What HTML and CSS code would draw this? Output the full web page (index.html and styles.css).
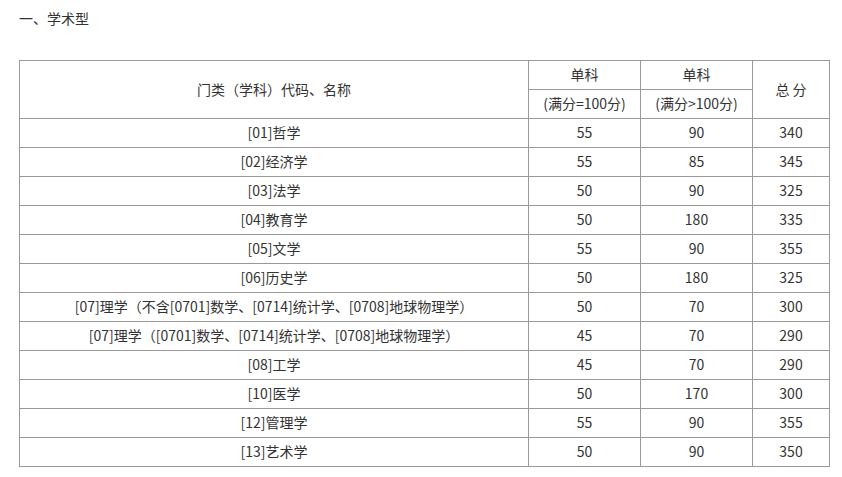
FILE: index.html
```html
<!DOCTYPE html>
<html lang="zh-CN">
<head>
<meta charset="utf-8">
<link rel="stylesheet" href="styles.css">
</head>
<body>
<p class="title">一、学术型</p>
<table class="score-table">
  <colgroup>
    <col class="c1"><col class="c2"><col class="c3"><col class="c4">
  </colgroup>
  <thead>
    <tr>
      <th rowspan="2">门类（学科）代码、名称</th>
      <th>单科</th>
      <th>单科</th>
      <th rowspan="2">总 分</th>
    </tr>
    <tr>
      <th>(满分=100分)</th>
      <th>(满分&gt;100分)</th>
    </tr>
  </thead>
  <tbody>
    <tr><td>[01]哲学</td><td>55</td><td>90</td><td>340</td></tr>
    <tr><td>[02]经济学</td><td>55</td><td>85</td><td>345</td></tr>
    <tr><td>[03]法学</td><td>50</td><td>90</td><td>325</td></tr>
    <tr><td>[04]教育学</td><td>50</td><td>180</td><td>335</td></tr>
    <tr><td>[05]文学</td><td>55</td><td>90</td><td>355</td></tr>
    <tr><td>[06]历史学</td><td>50</td><td>180</td><td>325</td></tr>
    <tr><td>[07]理学（不含[0701]数学、[0714]统计学、[0708]地球物理学）</td><td>50</td><td>70</td><td>300</td></tr>
    <tr><td>[07]理学（[0701]数学、[0714]统计学、[0708]地球物理学）</td><td>45</td><td>70</td><td>290</td></tr>
    <tr><td>[08]工学</td><td>45</td><td>70</td><td>290</td></tr>
    <tr><td>[10]医学</td><td>50</td><td>170</td><td>300</td></tr>
    <tr><td>[12]管理学</td><td>55</td><td>90</td><td>355</td></tr>
    <tr><td>[13]艺术学</td><td>50</td><td>90</td><td>350</td></tr>
  </tbody>
</table>
</body>
</html>
```

FILE: styles.css
```css
html, body {
  margin: 0;
  padding: 0;
  background: #fff;
}
body {
  padding: 0 0 0 19px;
  font-family: "Microsoft YaHei", "Noto Sans CJK SC", sans-serif;
  font-size: 14px;
  color: #333;
}
.title {
  margin: 0;
  padding-top: 7px;
  height: 60px;
  line-height: 22px;
  box-sizing: border-box;
}
.score-table {
  border-collapse: collapse;
  table-layout: fixed;
  width: 810px;
}
.c1 { width: 509px; }
.c2 { width: 112px; }
.c3 { width: 112px; }
.c4 { width: 77px; }
.score-table th,
.score-table td {
  border: 1px solid #999;
  padding: 0 0 2px;
  height: 26px;
  text-align: center;
  vertical-align: middle;
  font-weight: normal;
  line-height: 20px;
  white-space: nowrap;
}
```
